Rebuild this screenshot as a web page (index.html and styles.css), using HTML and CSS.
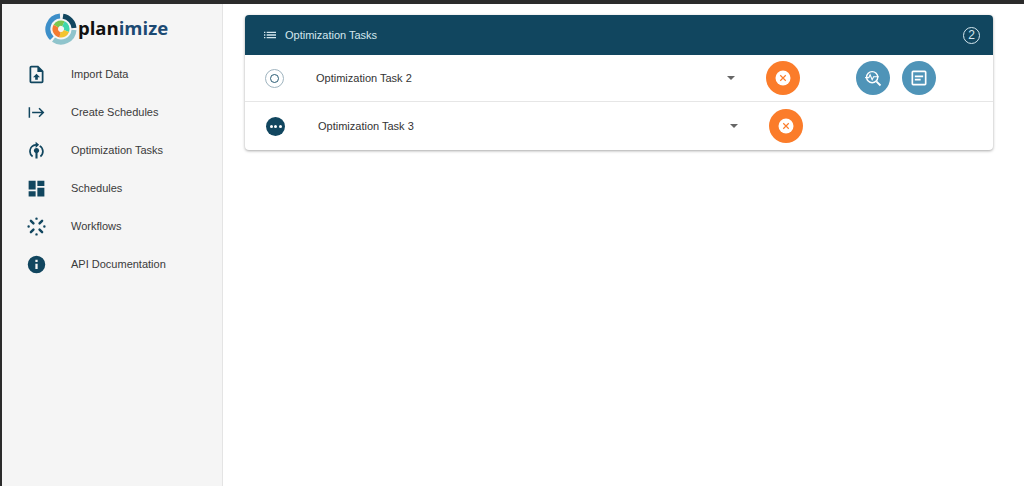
FILE: index.html
```html
<!DOCTYPE html>
<html lang="en">
<head>
<meta charset="utf-8">
<title>Planimize</title>
<link rel="stylesheet" href="styles.css">
</head>
<body>
<div class="topbar"></div>
<div class="shell">
  <aside class="sidebar">
    <div class="brand">
      <svg class="brand-mark" viewBox="0 0 32 32" width="32" height="32" fill="none">
        <path d="M15 3A13 13 0 0 0 6.800 25.200" stroke="#3d8fc9" stroke-width="5"/>
        <path d="M18 3.200A13 13 0 0 1 29 15" stroke="#11465f" stroke-width="5"/>
        <path d="M29 17A13 13 0 0 1 8.500 26.600" stroke="#8fc4cc" stroke-width="5"/>
        <path d="M10.980 13.100A5.800 5.800 0 0 1 18.450 10.740" stroke="#7ac74f" stroke-width="5.500"/>
        <path d="M18.450 10.740A5.800 5.800 0 0 1 21.450 17.980" stroke="#3fd6ac" stroke-width="5.500"/>
        <path d="M21.450 17.980A5.800 5.800 0 0 1 14.990 21.710" stroke="#f4c430" stroke-width="5.500"/>
        <path d="M14.990 21.710A5.800 5.800 0 0 1 10.980 13.100" stroke="#f47a30" stroke-width="5.500"/>
      </svg>
      <span class="brand-name">plan<span class="brand-accent">imize</span></span>
    </div>
    <nav class="nav">
      <a class="nav-item">
        <svg class="nav-icon" viewBox="0 0 24 24"><path d="M14 2H6a2 2 0 0 0-2 2v16a2 2 0 0 0 2 2h12a2 2 0 0 0 2-2V8zm4 18H6V4h7v5h5zM8 15h2.500v3h3v-3H16l-4-4z"/></svg>
        <span>Import Data</span>
      </a>
      <a class="nav-item">
        <svg class="nav-icon" viewBox="0 0 24 24"><path d="M3 6h1.700v12H3zM15.500 6.500l-1.200 1.200 3.400 3.400H7v1.800h10.700l-3.400 3.400 1.200 1.200L21 12z"/></svg>
        <span>Create Schedules</span>
      </a>
      <a class="nav-item">
        <svg class="nav-icon" viewBox="0 0 24 24"><path d="M12 9a3 3 0 0 0-1.200 5.750V21h2.400v-6.250A3 3 0 0 0 12 9zM5.500 13a6.500 6.500 0 0 1 5.500-6.400V9l4-3.500L11 2v2.600A8.500 8.500 0 0 0 7 19.800l1.100-1.700A6.500 6.500 0 0 1 5.500 13zM16.300 5.900l-1.200 1.600a6.500 6.500 0 0 1 .8 10.600l1.100 1.700a8.500 8.500 0 0 0-.7-13.900z"/></svg>
        <span>Optimization Tasks</span>
      </a>
      <a class="nav-item">
        <svg class="nav-icon" viewBox="0 0 24 24"><path d="M3 13h8V3H3zm0 8h8v-6H3zm10 0h8V11h-8zm0-18v6h8V3z"/></svg>
        <span>Schedules</span>
      </a>
      <a class="nav-item">
        <svg class="nav-icon nav-icon-open" viewBox="0 0 24 24"><path d="M12 3h.01M18.400 5.600l-2.900 2.900M21 12h.01M18.400 18.400l-2.900-2.900M12 21h.01M5.600 18.400l2.900-2.900M3 12h.01M5.600 5.600l2.900 2.900"/></svg>
        <span>Workflows</span>
      </a>
      <a class="nav-item">
        <svg class="nav-icon" viewBox="0 0 24 24"><path d="M12 2a10 10 0 1 0 0 20 10 10 0 0 0 0-20zm1.300 15h-2.600v-6h2.600zm0-8h-2.600V6.500h2.600z"/></svg>
        <span>API Documentation</span>
      </a>
    </nav>
  </aside>
  <main class="content">
    <section class="card">
      <header class="card-head">
        <svg class="head-icon" viewBox="0 0 24 24"><path d="M3 13h2v-2H3zm0 4h2v-2H3zm0-8h2V7H3zm4 4h14v-2H7zm0 4h14v-2H7zM7 7v2h14V7z"/></svg>
        <span class="head-title">Optimization Tasks</span>
        <span class="head-count">2</span>
      </header>
      <div class="task task-first">
        <span class="status status-idle"><span class="status-ring"></span></span>
        <span class="task-name">Optimization Task 2</span>
        <span class="caret"></span>
        <button class="fab fab-orange">
          <svg viewBox="0 0 24 24"><circle cx="12" cy="12" r="9" fill="#fff"/><path fill="none" stroke="#fb7c2a" stroke-width="1.400" d="M8.700 8.700l6.600 6.600m0-6.600-6.600 6.600"/></svg>
        </button>
        <button class="fab fab-blue fab-far">
          <svg viewBox="0 0 24 24" fill="none" stroke="#fff"><circle cx="11" cy="11" r="6.700" stroke-width="1.700"/><path stroke-width="2.200" d="M16 16l5 5"/><path stroke-width="1.300" d="M2.500 11.500h4.500l1.500-3.500 2.500 6 1.700-3.500H19"/></svg>
        </button>
        <button class="fab fab-blue">
          <svg viewBox="0 0 24 24"><path fill="#fff" d="M19 3H5a2 2 0 0 0-2 2v14a2 2 0 0 0 2 2h14a2 2 0 0 0 2-2V5a2 2 0 0 0-2-2zm0 16H5V5h14zM7 9h10v2H7zm0 4h7v2H7z"/></svg>
        </button>
      </div>
      <div class="task task-second">
        <span class="status status-busy"><i></i><i></i><i></i></span>
        <span class="task-name">Optimization Task 3</span>
        <span class="caret"></span>
        <button class="fab fab-orange">
          <svg viewBox="0 0 24 24"><circle cx="12" cy="12" r="9" fill="#fff"/><path fill="none" stroke="#fb7c2a" stroke-width="1.400" d="M8.700 8.700l6.600 6.600m0-6.600-6.600 6.600"/></svg>
        </button>
      </div>
    </section>
  </main>
</div>
</body>
</html>
```

FILE: styles.css
```css
* { box-sizing: border-box; }
html, body { height: 100%; }
body {
  margin: 0;
  display: flex;
  flex-direction: column;
  overflow: hidden;
  background: #fff;
  color: #333;
  font-family: "Liberation Sans", Arial, sans-serif;
  font-size: 11px;
}
.topbar { height: 4px; flex: none; background: #2b2b2b; }
.shell { flex: 1; display: flex; min-height: 0; }
.sidebar {
  width: 223px;
  flex: none;
  background: #f5f5f5;
  border-left: 2px solid #2b2b2b;
  border-right: 1px solid #e4e4e4;
}
.brand {
  display: flex;
  align-items: center;
  height: 51px;
  padding: 0 0 2px 43px;
}
.brand-mark { flex: none; margin-right: 1px; }
.brand-name {
  font-family: "Open Sans", sans-serif;
  font-weight: 700;
  font-size: 18.500px;
  line-height: 1;
  color: #111;
}
.brand-accent { color: #1c4a73; }
.nav { display: flex; flex-direction: column; }
.nav-item {
  display: flex;
  align-items: center;
  height: 38px;
  padding-left: 24px;
  color: #3a3a3a;
}
.nav-icon { width: 21px; height: 21px; fill: #11465f; margin-right: 24px; flex: none; }
.nav-icon-open { fill: none; stroke: #11465f; stroke-width: 2.800; stroke-linecap: round; }
.content { flex: 1; padding: 11px 31px 0 22px; }
.card {
  background: #fff;
  border-radius: 4px;
  box-shadow: 0 1px 3px rgba(0,0,0,.35);
}
.card-head {
  display: flex;
  align-items: center;
  height: 40px;
  padding: 0 13px 0 17px;
  background: #11465f;
  border-radius: 4px 4px 0 0;
  color: #d4e6ee;
}
.head-icon { width: 16px; height: 16px; fill: #d4e6ee; margin-right: 7px; flex: none; }
.head-title { flex: 1; }
.head-count {
  width: 17px;
  height: 17px;
  border: 1px solid #d4e6ee;
  border-radius: 50%;
  display: flex;
  align-items: center;
  justify-content: center;
  font-size: 12px;
}
.task { display: flex; align-items: center; }
.task-first { height: 47px; padding-left: 20px; border-bottom: 1px solid #e6e6e6; }
.task-second { height: 48px; padding-left: 21px; }
.status {
  width: 19px;
  height: 19px;
  border-radius: 50%;
  flex: none;
  display: flex;
  align-items: center;
  justify-content: center;
}
.status-idle { border: 1px solid #9fb4bf; }
.status-ring { width: 9px; height: 9px; border: 1.500px solid #2a5c74; border-radius: 50%; }
.status-busy { background: #11465f; gap: 1.500px; }
.status-busy i { width: 3px; height: 3px; border-radius: 50%; background: #fff; }
.task-name { width: 411px; margin-left: 32px; flex: none; color: #333; }
.task-second .task-name { margin-left: 33px; width: 412px; }
.caret {
  width: 0;
  height: 0;
  flex: none;
  border-left: 4.500px solid transparent;
  border-right: 4.500px solid transparent;
  border-top: 4.500px solid #666;
  margin-right: 31px;
}
.fab {
  width: 34px;
  height: 34px;
  padding: 0;
  border: 0;
  border-radius: 50%;
  flex: none;
  display: flex;
  align-items: center;
  justify-content: center;
}
.fab svg { width: 20px; height: 20px; }
.fab-orange { background: #fb7c2a; }
.fab-blue { background: #4f94b8; margin-left: 12px; }
.fab-blue.fab-far { margin-left: 56px; }
```
